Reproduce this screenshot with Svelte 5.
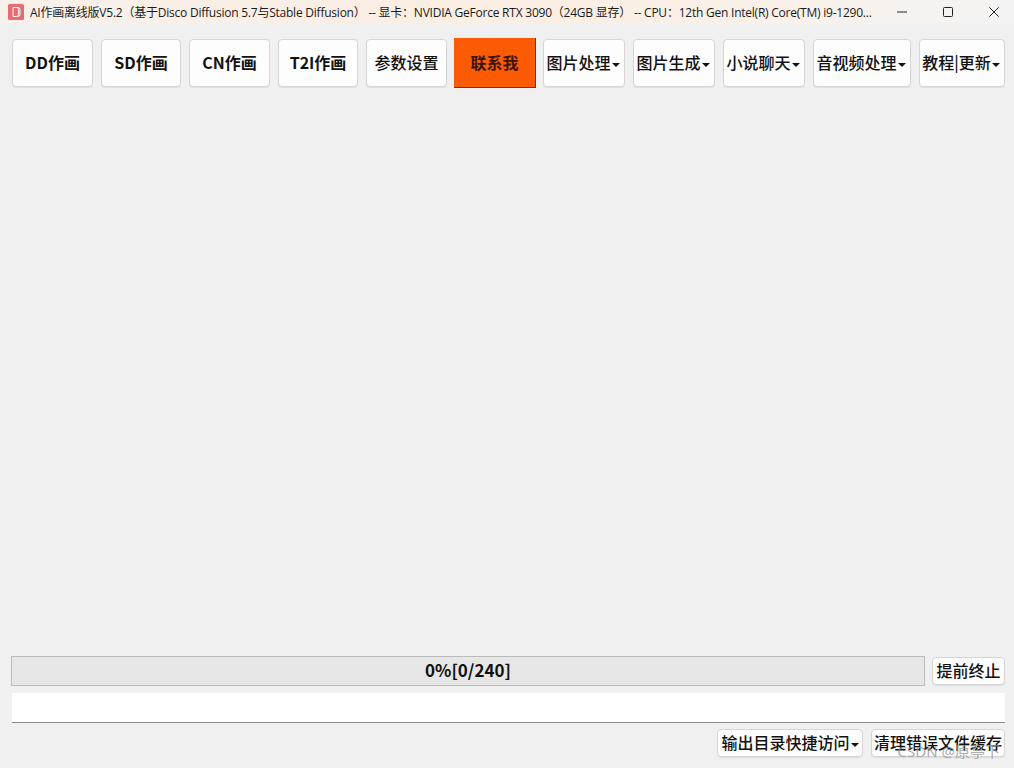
<script>
  const tabs = [
    { label: 'DD作画' },
    { label: 'SD作画' },
    { label: 'CN作画' },
    { label: 'T2I作画' },
    { label: '参数设置', small: true },
    { label: '联系我', accent: true, small: true },
    { label: '图片处理', menu: true },
    { label: '图片生成', menu: true },
    { label: '小说聊天', menu: true },
    { label: '音视频处理', menu: true },
    { label: '教程|更新', menu: true }
  ];
</script>

<div class="window">
  <header class="titlebar">
    <svg class="logo" viewBox="0 0 16 16" width="16" height="16">
      <rect width="16" height="16" rx="1.5" fill="#e96a70" />
      <path d="M5 3.5h3.5a2 2 0 0 1 2 2v5a2 2 0 0 1-2 2H5z M8.5 3.5h1.5a2 2 0 0 1 2 2v5a2 2 0 0 1-2 2" fill="none" stroke="#fff" stroke-width="1" />
    </svg>
    <span class="title">AI作画离线版V5.2（基于Disco Diffusion 5.7与Stable Diffusion） -- 显卡：NVIDIA GeForce RTX 3090（24GB 显存） -- CPU：12th Gen Intel(R) Core(TM) i9-1290...</span>
    <div class="controls">
      <svg viewBox="0 0 10 10" width="10" height="10"><path d="M0 5h10" stroke="#222" stroke-width="1" /></svg>
      <svg viewBox="0 0 10 10" width="10" height="10"><rect x="0.5" y="0.5" width="9" height="9" rx="1" fill="none" stroke="#222" /></svg>
      <svg viewBox="0 0 10 10" width="10" height="10"><path d="M0.3 0.3l9.4 9.4M9.7 0.3l-9.4 9.4" stroke="#222" stroke-width="1" /></svg>
    </div>
  </header>

  <nav class="toolbar">
    {#each tabs as tab}
      <button class="btn" class:accent={tab.accent} class:small={tab.small || tab.menu} class:menu={tab.menu}>
        {tab.label}{#if tab.menu}<span class="caret"></span>{/if}
      </button>
    {/each}
  </nav>

  <main class="content"></main>

  <section class="progress-row">
    <div class="progress">0%[0/240]</div>
    <button class="btn small stop">提前终止</button>
  </section>

  <div class="log"></div>

  <footer class="actions">
    <button class="btn small open">输出目录快捷访问<span class="caret"></span></button>
    <button class="btn small clean">清理错误文件缓存</button>
  </footer>

  <span class="watermark">CSDN @原亭下</span>
</div>

<style>
  :global(body) {
    margin: 0;
    background: #f0f0f0;
  }

  .window {
    position: relative;
    display: flex;
    flex-direction: column;
    height: 768px;
    overflow: hidden;
    background: #f0f0f0;
    font-family: 'Noto Sans CJK SC', sans-serif;
    color: #111;
  }

  .titlebar {
    display: flex;
    align-items: center;
    height: 24px;
    flex: none;
    padding-left: 8px;
    background: linear-gradient(90deg, #f8f0ea, #fbeee2 50%, #f9f1ea 80%, #f3f3f3);
  }

  .logo {
    flex: none;
    margin-right: 6px;
  }

  .title {
    flex: none;
    width: 860px;
    font-family: 'Open Sans', 'Noto Sans CJK SC', sans-serif;
    font-size: 12px;
    letter-spacing: -0.23px;
    white-space: nowrap;
    overflow: hidden;
    color: #1a1a1a;
  }

  .controls {
    display: flex;
    align-items: center;
    gap: 36px;
    margin-left: 7px;
  }

  .toolbar {
    display: grid;
    grid-template-columns: 81px 80px 81px 80px 81px 80px 82px 82px 82px 98px 86px;
    column-gap: 8px;
    align-items: center;
    height: 50px;
    flex: none;
    margin-top: 14px;
    padding-left: 12px;
  }

  .btn {
    height: 48px;
    padding: 0 0 2px;
    border: 1px solid #d6d6d6;
    border-radius: 4px;
    background: #fdfdfd;
    font-family: 'Noto Sans CJK SC', sans-serif;
    font-size: 16px;
    font-weight: 700;
    color: #111;
    white-space: nowrap;
    box-shadow: 0 1px 1px rgba(0, 0, 0, 0.08);
  }

  .btn.small {
    font-weight: 500;
  }

  .btn.menu {
    padding-right: 2px;
  }

  .btn.accent {
    height: 50px;
    margin: 0 -1px;
    border: none;
    border-right: 1px solid #7a3208;
    border-bottom: 1px solid #7a3208;
    border-radius: 0;
    background: #fd5a04;
    color: #3a1404;
    font-weight: 700;
    box-shadow: none;
  }

  .caret {
    display: inline-block;
    margin-left: 1px;
    vertical-align: middle;
    border-top: 4px solid #111;
    border-left: 4px solid transparent;
    border-right: 4px solid transparent;
  }

  .content {
    flex: 1;
  }

  .progress-row {
    display: flex;
    align-items: center;
    gap: 7px;
    padding: 0 9px 0 11px;
    height: 30px;
    flex: none;
  }

  .progress {
    flex: 1;
    height: 30px;
    box-sizing: border-box;
    border: 1px solid #bcbcbc;
    background: #e6e6e6;
    text-align: center;
    font-size: 17px;
    font-weight: 700;
    line-height: 26px;
  }

  .stop {
    width: 73px;
    height: 28px;
  }

  .log {
    flex: none;
    height: 29px;
    margin: 7px 9px 0 12px;
    background: #fff;
    border-bottom: 1px solid #8a8a8a;
  }

  .actions {
    display: flex;
    justify-content: flex-end;
    gap: 8px;
    flex: none;
    height: 28px;
    margin-top: 6px;
    margin-bottom: 11px;
    padding-right: 9px;
  }

  .open {
    width: 146px;
    height: 28px;
  }

  .clean {
    width: 134px;
    height: 28px;
  }

  .watermark {
    position: absolute;
    right: 14px;
    bottom: 7px;
    font-family: 'Noto Sans', 'Noto Sans CJK SC', sans-serif;
    font-size: 15px;
    color: rgba(150, 150, 150, 0.8);
    pointer-events: none;
  }
</style>
